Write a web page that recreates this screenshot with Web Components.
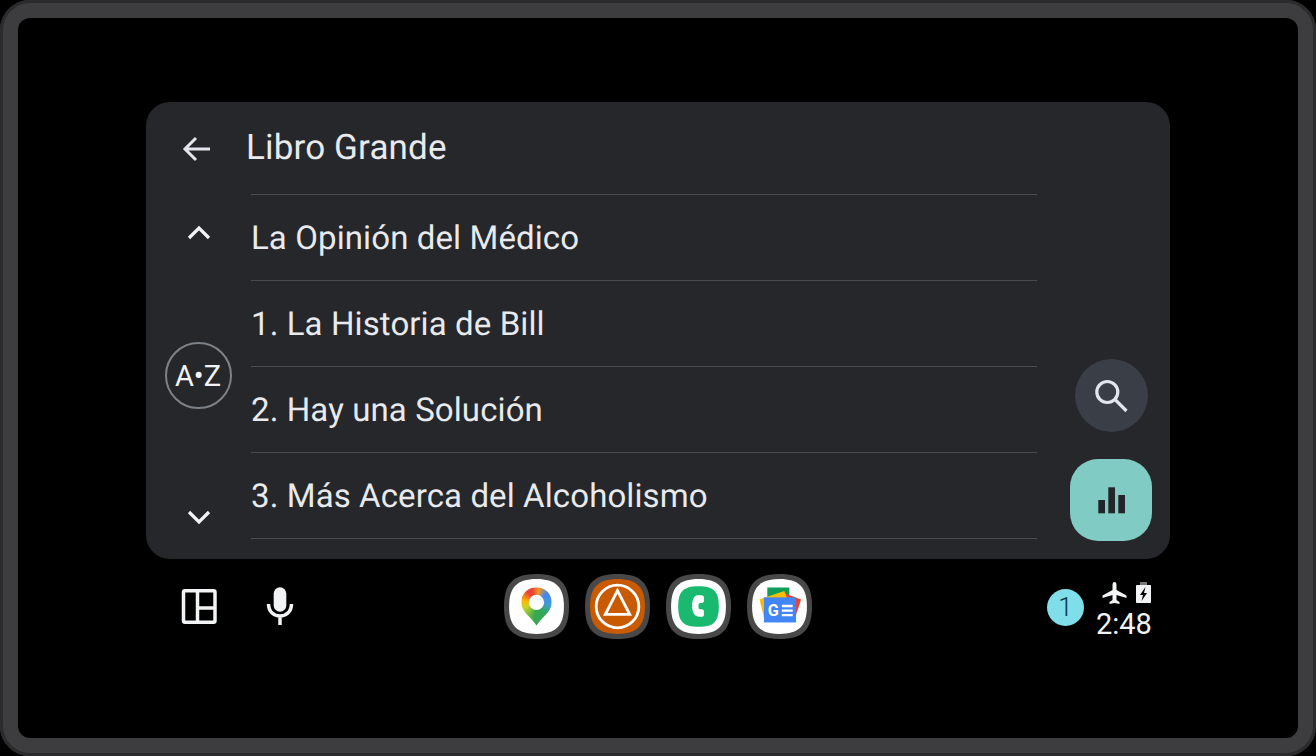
<!doctype html>
<html lang="es">
<head>
<meta charset="utf-8">
<title>Libro Grande</title>
<style>
	html,
	body {
		background: #000;
		margin: 0;
		padding: 0;
		width: 1316px;
		height: 756px;
		overflow: hidden;
	}
</style>
</head>
<body>
<car-frame>
	<list-panel title-text="Libro Grande">
		<list-row>La Opinión del Médico</list-row>
		<list-row>1. La Historia de Bill</list-row>
		<list-row>2. Hay una Solución</list-row>
		<list-row>3. Más Acerca del Alcoholismo</list-row>
	</list-panel>
	<dock-bar></dock-bar>
</car-frame>

<script>
(() => {
	// ==========
	// Constants.
	// ==========

	const FONT = `Roboto, 'Liberation Sans', sans-serif`;
	const SQUIRCLE = 'M32 0C55 0 64 9 64 32C64 55 55 64 32 64C9 64 0 55 0 32C0 9 9 0 32 0Z';
	const INNER = 'M32 5C51 5 59 13 59 32C59 51 51 59 32 59C13 59 5 51 5 32C5 13 13 5 32 5Z';

	// Helper: define element from markup.
	const define = (name, markup) => {
		const template = document.createElement('template');
		template.innerHTML = markup;

		window.customElements.define(name, class extends HTMLElement {
			constructor() {
				super();
				this.attachShadow({ mode: 'open' });
				this.shadowRoot.appendChild(template.content.cloneNode(true));

				// Set title?
				const title = this.shadowRoot.querySelector('[data-title]');
				if (title) {
					title.textContent = this.getAttribute('title-text');
				}
			}
		});
	};

	// ======
	// Frame.
	// ======

	define('car-frame', `
		<style>
			:host {
				display: flex;
				flex-direction: column;
				box-sizing: border-box;
				width: 1316px;
				height: 756px;
				background: #000;
				border: 18px solid #3d3d3f;
				border-radius: 30px;
				padding-top: 84px;
				font-family: ${FONT};
				position: relative;
			}
			.edge {
				position: absolute;
				inset: -18px;
				border: 3px solid #2b2b2d;
				border-radius: 30px;
				pointer-events: none;
			}
		</style>
		<span class="edge"></span>
		<slot></slot>
	`);

	// ===========
	// List panel.
	// ===========

	define('list-panel', `
		<style>
			:host {
				display: grid;
				grid-template-columns: 105px 786px 1fr;
				grid-template-rows: 92px 1fr;
				box-sizing: border-box;
				flex: none;
				align-self: center;
				width: 1024px;
				height: 457px;
				background: #25272a;
				border-radius: 24px;
				color: #e8eaed;
			}
			.head {
				grid-column: 1 / -1;
				display: flex;
				align-items: center;
				padding: 0 0 0 30px;
			}
			.head svg {
				width: 42px;
				height: 42px;
				flex: none;
				margin-right: 28px;
				margin-top: 1px;
			}
			.title {
				font-size: 35px;
				line-height: 40px;
				letter-spacing: 0.15px;
				text-rendering: geometricPrecision;
				color: #e8eaed;
			}
			.rail {
				display: flex;
				flex-direction: column;
				align-items: center;
				justify-content: space-between;
				padding: 19px 0 22px;
				margin-left: 1px;
			}
			.rail svg {
				width: 40px;
				height: 40px;
				display: block;
			}
			.az {
				box-sizing: border-box;
				width: 67px;
				height: 67px;
				margin-right: 2px;
				padding-top: 2px;
				border: 2px solid #7d8288;
				border-radius: 50%;
				display: flex;
				align-items: center;
				justify-content: center;
				font-size: 29px;
				color: #f1f3f4;
				white-space: nowrap;
			}
			.list {
				display: flex;
				flex-direction: column;
				border-top: 1px solid #4a4c50;
			}
			.side {
				display: flex;
				flex-direction: column;
				align-items: center;
				justify-content: flex-end;
				gap: 27px;
				padding: 0 18px 18px 0;
				margin-left: auto;
				width: 82px;
			}
			.search {
				width: 73px;
				height: 73px;
				border-radius: 50%;
				background: #3a3e46;
				display: flex;
				align-items: center;
				justify-content: center;
			}
			.search svg {
				width: 42px;
				height: 42px;
			}
			.now {
				width: 82px;
				height: 82px;
				border-radius: 28px;
				background: #80cbc4;
				display: flex;
				align-items: center;
				justify-content: center;
			}
			.now svg {
				width: 40px;
				height: 40px;
			}
		</style>
		<div class="head">
			<svg viewBox="0 0 42 42" fill="none" stroke="#e3e6ec" stroke-width="3">
				<path d="M34 21H9M20 10L9 21L20 32"/>
			</svg>
			<span class="title" data-title></span>
		</div>
		<div class="rail">
			<svg viewBox="0 0 40 40" fill="none" stroke="#f1f3f4" stroke-width="3.2">
				<path d="M10 25L20 15L30 25"/>
			</svg>
			<div class="az">A•Z</div>
			<svg viewBox="0 0 40 40" fill="none" stroke="#f1f3f4" stroke-width="3.2">
				<path d="M10 15L20 25L30 15"/>
			</svg>
		</div>
		<div class="list"><slot></slot></div>
		<div class="side">
			<div class="search">
				<svg viewBox="0 0 42 42" fill="none" stroke="#e3e6ec" stroke-width="3.2">
					<circle cx="17.300" cy="17" r="10.500"/>
					<path d="M25 24.500L36.500 36"/>
				</svg>
			</div>
			<div class="now">
				<svg viewBox="0 0 40 40" fill="#232528">
					<rect x="7.300" y="20" width="6.700" height="13.300"/>
					<rect x="17.300" y="7.300" width="6.700" height="26"/>
					<rect x="27.300" y="15" width="6.700" height="18.300"/>
				</svg>
			</div>
		</div>
	`);

	// =========
	// List row.
	// =========

	define('list-row', `
		<style>
			:host {
				display: flex;
				align-items: center;
				box-sizing: border-box;
				height: 86px;
				padding-top: 2px;
				border-bottom: 1px solid #4a4c50;
				font-size: 33px;
				letter-spacing: 0.1px;
				text-rendering: geometricPrecision;
				color: #e8eaed;
				white-space: nowrap;
			}
		</style>
		<slot></slot>
	`);

	// =========
	// Dock bar.
	// =========

	define('dock-bar', `
		<style>
			:host {
				display: grid;
				grid-template-columns: 1fr auto 1fr;
				align-items: center;
				flex: none;
				height: 96px;
				color: #f1f3f4;
			}
			.left {
				display: flex;
				padding-left: 140px;
			}
			.left svg {
				width: 81px;
				height: 44px;
				display: block;
			}
			.apps {
				display: flex;
				gap: 16px;
				padding-bottom: 1px;
			}
			.apps svg {
				width: 65px;
				height: 65px;
				display: block;
			}
			.right {
				display: flex;
				align-items: center;
				justify-content: flex-end;
				gap: 12px;
				padding-right: 147px;
			}
			.badge {
				width: 37px;
				height: 37px;
				border-radius: 50%;
				background: #80deea;
				color: #063640;
				font-size: 26px;
				line-height: 37px;
				text-align: center;
				font-weight: 300;
			}
			.status {
				display: flex;
				flex-direction: column;
				width: 55px;
			}
			.status svg {
				display: block;
				width: 55px;
				height: 28px;
			}
			.time {
				font-size: 29px;
				line-height: 28px;
				margin-top: 5px;
				text-align: center;
				color: #f1f3f4;
			}
		</style>
		<div class="left">
			<svg viewBox="0 0 81 44">
				<path fill="none" stroke="#f1f3f4" stroke-width="3.500" stroke-linejoin="round" d="M27 5.700H55.500A1.500 1.500 0 0 1 57 7.200V35.800A1.500 1.500 0 0 1 55.500 37.300H27A1.500 1.500 0 0 1 25.500 35.800V7.200A1.500 1.500 0 0 1 27 5.700ZM39.500 5.700V37.300M39.500 23H57"/>
			</svg>
			<svg viewBox="0 0 81 44">
				<rect x="34.700" y="2.300" width="12.600" height="24.400" rx="6.300" fill="#f1f3f4"/>
				<path fill="none" stroke="#f1f3f4" stroke-width="3.500" d="M29.500 19C29.500 35 52.500 35 52.500 19M41 30V40"/>
			</svg>
		</div>
		<div class="apps">
			<svg viewBox="0 0 64 64">
				<path d="${SQUIRCLE}" fill="#484848"/>
				<path d="${INNER}" fill="#fff"/>
				<foreignObject x="16" y="13" width="32" height="40">
					<div xmlns="http://www.w3.org/1999/xhtml" style="width:32px;height:40px;background:conic-gradient(from -20deg at 16px 15px,#ea4335 0deg,#f79a1f 30deg,#4285f4 70deg,#3f9bd8 115deg,#34a853 170deg,#34a853 205deg,#c7d22c 265deg,#fbbc04 295deg,#ea4335 340deg);clip-path:path('M16 0C25 0 31 7 31 15C31 25 20 30 16 38C12 30 1 25 1 15C1 7 7 0 16 0Z')"></div>
				</foreignObject>
				<circle cx="32" cy="28" r="7.500" fill="#fff"/>
			</svg>
			<svg viewBox="0 0 64 64">
				<path d="${SQUIRCLE}" fill="#484848"/>
				<path d="${INNER}" fill="#c95a00"/>
				<circle cx="32" cy="32" r="21" fill="none" stroke="#fff" stroke-width="2.800"/>
				<path d="M32 16.300L44 39.700H20Z" fill="none" stroke="#fff" stroke-width="2.800"/>
			</svg>
			<svg viewBox="0 0 64 64">
				<path d="${SQUIRCLE}" fill="#484848"/>
				<path d="${INNER}" fill="#fff"/>
				<path d="M32 12C47 12 52 17 52 32C52 47 47 52 32 52C17 52 12 47 12 32C12 17 17 12 32 12Z" fill="#19b96f"/>
				<path fill="#fff" d="M31 21H35C36.500 21 37.300 22 37.300 23V26.500C37.300 28 36 28.500 35 28.500H33.500C32.500 28.500 32 29.500 32 31V32.500C32 34 32.500 34.800 33.500 34.800H35C36.500 34.800 37.300 35.500 37.300 37V40C37.300 41.500 36.500 42 35 42H33C28 42 25.700 38 25.700 31.500C25.700 25 28 21 31 21Z"/>
			</svg>
			<svg viewBox="0 0 64 64">
				<path d="${SQUIRCLE}" fill="#484848"/>
				<path d="${INNER}" fill="#fff"/>
				<rect x="20" y="13.300" width="21.700" height="14" fill="#0f9d58"/>
				<path d="M36.700 19L53.300 25L48.300 40H36.700Z" fill="#ea4335"/>
				<path d="M12.300 25L36.700 16.700L42 30V40L17 44Z" fill="#fbbc04"/>
				<rect x="16.700" y="23" width="31.600" height="24.700" fill="#4285f4"/>
				<text x="20.500" y="41.500" font-family="${FONT}" font-size="16" font-weight="700" fill="#fff">G</text>
				<path d="M34.300 31.500H45M34.300 36H45M34.300 40.500H45" stroke="#fff" stroke-width="2.300"/>
			</svg>
		</div>
		<div class="right">
			<div class="badge">1</div>
			<div class="status">
				<svg viewBox="0 0 55 28">
					<path fill="#f1f3f4" transform="translate(1.500 4)" d="M17 1C18.500 1 19 2.500 19 4V9L29 14.500V17L19 14V19L22 21V23L17 22L12 23V21L15 19V14L5 17V14.500L15 9V4C15 2.500 15.500 1 17 1Z"/>
					<rect x="44" y="5" width="7" height="3" fill="#77797b"/>
					<path fill-rule="evenodd" fill="#f1f3f4" d="M41 8H54C54.600 8 55 8.400 55 9V25C55 25.600 54.600 26 54 26H41C40.400 26 40 25.600 40 25V9C40 8.400 40.400 8 41 8ZM49.500 10L44 18H47L45.500 24L51 16H48Z"/>
				</svg>
				<div class="time">2:48</div>
			</div>
		</div>
	`);
})();
</script>
</body>
</html>
